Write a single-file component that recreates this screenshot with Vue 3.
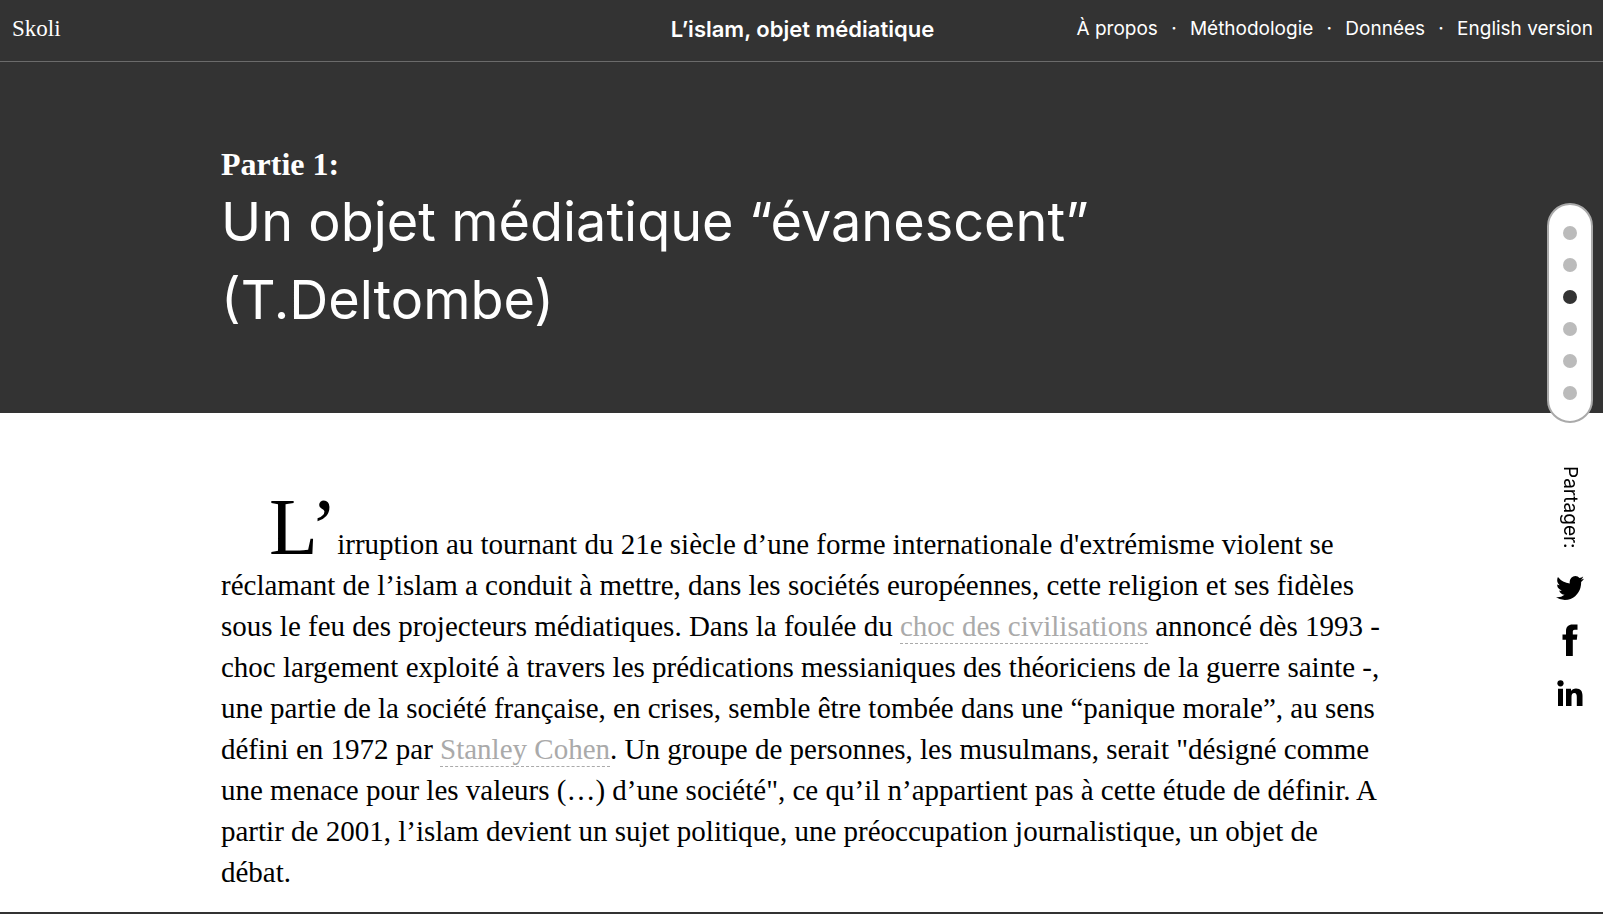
<script setup>
const links = ['À propos', 'Méthodologie', 'Données', 'English version']
const sections = [1, 2, 3, 4, 5, 6]
const current = 3
</script>

<template>
  <div class="page">
    <header class="bar">
      <a class="logo" href="#">Skoli</a>
      <a class="site-title" href="#">L’islam, objet médiatique</a>
      <nav class="links">
        <template v-for="(label, i) in links" :key="label">
          <span v-if="i" class="sep">·</span>
          <a href="#">{{ label }}</a>
        </template>
      </nav>
    </header>

    <section class="hero">
      <p class="part">Partie 1:</p>
      <h1>Un objet médiatique “évanescent”<br>(T.Deltombe)</h1>
    </section>

    <main class="article">
      <p>
        <span class="cap">L’</span>irruption au tournant du 21e siècle d’une forme internationale d'extrémisme violent se<br>
        réclamant de l’islam a conduit à mettre, dans les sociétés européennes, cette religion et ses fidèles<br>
        sous le feu des projecteurs médiatiques. Dans la foulée du <a href="#">choc des civilisations</a> annoncé dès 1993 -<br>
        choc largement exploité à travers les prédications messianiques des théoriciens de la guerre sainte -,<br>
        une partie de la société française, en crises, semble être tombée dans une “panique morale”, au sens<br>
        défini en 1972 par <a href="#">Stanley Cohen</a>. Un groupe de personnes, les musulmans, serait "désigné comme<br>
        une menace pour les valeurs (…) d’une société", ce qu’il n’appartient pas à cette étude de définir. A<br>
        partir de 2001, l’islam devient un sujet politique, une préoccupation journalistique, un objet de<br>
        débat.
      </p>
    </main>

    <aside class="rail">
      <nav class="dots" aria-label="Sections">
        <a v-for="n in sections" :key="n" href="#" :class="{ active: n === current }" :aria-label="'Section ' + n"></a>
      </nav>
      <div class="share">
        <span class="share-label">Partager:</span>
        <a href="#" aria-label="Twitter">
          <svg width="28" height="24" viewBox="108 256 1576 1280" preserveAspectRatio="none"><path d="M1684 408q-67 98-162 167 1 14 1 42 0 130-38 259.500t-115.500 248.500-184.500 210.500-258 146-323 54.500q-271 0-496-145 35 4 78 4 225 0 401-138-105-2-188-64.500t-114-159.500q33 5 61 5 43 0 85-11-112-23-185.500-111.500t-73.500-205.500v-4q68 38 146 41-66-44-105-115t-39-154q0-88 44-163 121 149 294.500 238.500t371.500 99.500q-8-38-8-74 0-134 94.500-228.500t228.500-94.500q140 0 236 102 109-21 205-78-37 115-142 178 93-10 186-50z" /></svg>
        </a>
        <a href="#" aria-label="Facebook">
          <svg width="16" height="32" viewBox="0 0 16 32"><path d="M4 32V15.800H.5V10.500H4V7.200C4 2.700 6.500.5 10.500.5h5v5.200h-2.700c-1.500 0-2 .7-2 2v2.800h4.600l-.6 5.300h-4V32z" /></svg>
        </a>
        <a href="#" aria-label="LinkedIn">
          <svg width="26" height="26" viewBox="0 0 26 26"><circle cx="3.500" cy="3.300" r="3.100" /><path d="M1 8.800h5V26H1zM9 8.800h5v2.300c1-1.700 2.700-2.700 5-2.700 4.800 0 6.500 3 6.500 7.400V26h-5.700v-9c0-2.200-.5-4-2.500-4s-2.800 1.600-2.800 4v9H9z" /></svg>
        </a>
      </div>
    </aside>
    <div class="next"></div>
  </div>
</template>

<style>
html, body { background: #fff; }
</style>

<style scoped>
.page {
  color: #000;
  font-family: "Liberation Serif", serif;
}
a { color: inherit; text-decoration: none; }
.bar {
  display: grid;
  grid-template-columns: 1fr auto 1fr;
  align-items: center;
  padding: 0 10px 3px 12px;
  border-bottom: 1px solid #6b6b6b;
  background: #333;
  color: #fff;
  font-family: Inter, "Open Sans", sans-serif;
  font-size: 19px;
  line-height: 58px;
}
.logo {
  font-family: "Liberation Serif", serif;
  font-size: 23px;
}
.site-title { font-size: 22px; font-weight: 600; }
.links {
  display: flex;
  justify-content: flex-end;
  white-space: nowrap;
}
.sep { width: 32px; text-align: center; }
.hero {
  padding: 83px 221px 74px;
  background: #333;
  color: #fff;
}
.part {
  margin: 0;
  font-size: 32px;
  font-weight: 700;
  line-height: 38px;
}
h1 {
  margin: 0;
  font-family: Inter, "Open Sans", sans-serif;
  font-size: 54px;
  font-weight: 400;
  line-height: 78px;
  white-space: nowrap;
}
.article { padding: 111px 221px 19px; }
.article p {
  margin: 0;
  font-size: 29px;
  line-height: 41px;
  text-indent: 48px;
  white-space: nowrap;
}
.article a {
  padding-bottom: 1px;
  color: #aaa;
  border-bottom: 1px dashed #aaa;
}
.cap { font-size: 80px; line-height: 0; }
.next { height: 2px; background: #333; }
.rail {
  position: fixed;
  top: 203px;
  right: 10px;
  display: flex;
  flex-direction: column;
  align-items: center;
}
.dots {
  display: flex;
  flex-direction: column;
  gap: 18px;
  padding: 21px 14px;
  border: 2px solid #aaa;
  border-radius: 23px;
  background: #fff;
}
.dots a {
  width: 14px;
  height: 14px;
  border-radius: 50%;
  background: #bbb;
}
.dots a.active { background: #333; }
.share {
  display: flex;
  flex-direction: column;
  align-items: center;
  gap: 24px;
  padding-top: 43px;
}
.share svg { display: block; }
.share-label {
  writing-mode: vertical-rl;
  height: 86px;
  font-family: Inter, "Open Sans", sans-serif;
  font-size: 19px;
  line-height: 24px;
}
</style>
